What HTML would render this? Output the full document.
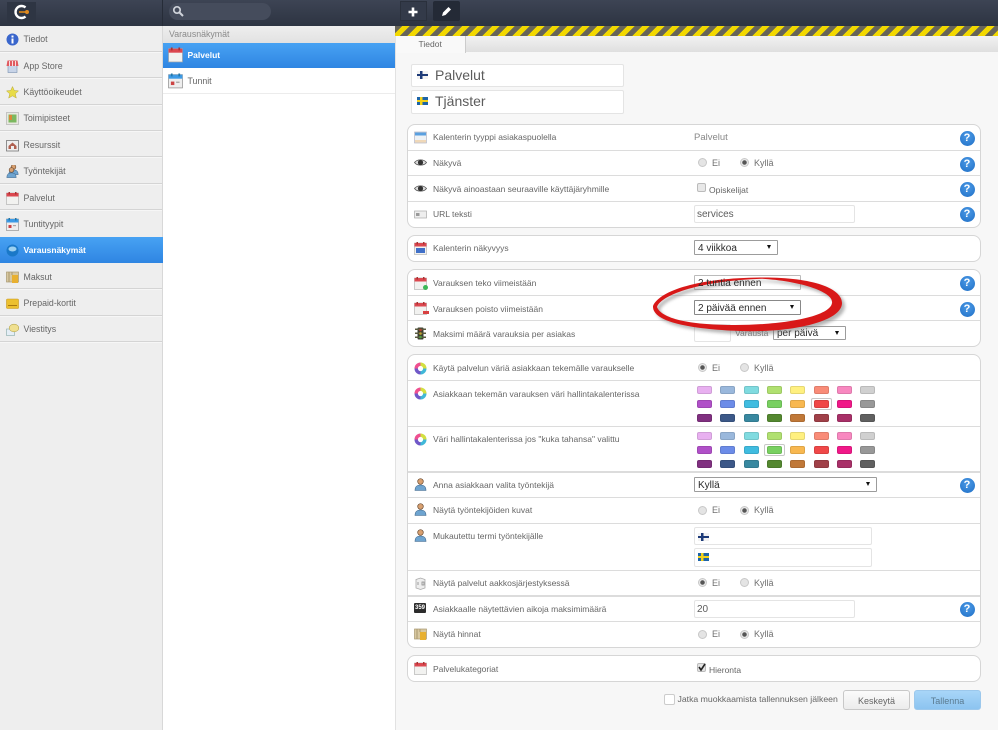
<!DOCTYPE html>
<html lang="fi"><head><meta charset="utf-8"><title>Varausnäkymät</title>
<style>
*{box-sizing:border-box}
html,body{margin:0;padding:0}
body{position:relative;width:998px;height:730px;overflow:hidden;background:#f7f7f7;font-family:"Liberation Sans",Arial,sans-serif;color:#555}
div,span,svg{position:absolute}
.top{left:0;top:0;width:998px;height:26px;background:linear-gradient(#3d4454,#2d3442)}
.side{left:0;top:26px;width:163px;height:704px;background:#eee;border-right:1px solid #d8d8d8}
.sep{left:0;width:162px;height:2px;background:linear-gradient(#d4d4d4 50%,#f6f6f6 50%)}
.s{left:23.5px;font-size:8.8px;line-height:12px;color:#666;white-space:nowrap}
.act{background:linear-gradient(#47a2f3,#2f85e2)}
.list{left:163px;top:26px;width:232px;height:704px;background:#fff}
.main{left:395px;top:36px;width:603px;height:694px;background:#f7f7f7;border-left:1px solid #e2e2e2}
.panel{left:407px;width:574px;background:#fff;border:1px solid #d6d6d6;border-radius:8px}
.hr{left:408px;width:572px;height:1px;background:#dcdcdc}
.l{left:433px;font-size:8.5px;line-height:12px;color:#666;white-space:nowrap}
.v{font-size:9px;line-height:12px;color:#707070;white-space:nowrap}
.inp{background:#fff;border:1px solid #e4e4e4;border-radius:2px}
.intx{font-size:10px;line-height:12px;color:#5c5c5c;white-space:nowrap}
.sel{background:#fff;border:1px solid #9c9c9c;border-radius:1px;font-size:10px;line-height:15px;color:#2a2a2a;padding-left:3px;white-space:nowrap}
.sel:after{content:"";position:absolute;right:6px;top:4px;border-left:2px solid transparent;border-right:2px solid transparent;border-top:4px solid #111}
.q{width:15px;height:15px;left:959.5px;border-radius:50%;background:radial-gradient(circle at 50% 35%,#4c9ae6,#1f6fc6);color:#fff;font-size:11px;font-weight:bold;line-height:15px;text-align:center}
.r{width:9px;height:9px;border-radius:50%;background:#e4e4e4;border:1px solid #c8c8c8}
.r.on{background:radial-gradient(circle,#555 0 2px,#e8e8e8 2.5px)}
.c{width:15px;height:8px;border-radius:2px;border:1px solid rgba(0,0,0,.1)}
.sw{width:21px;height:12px;border:1px solid #c8c8c8;border-radius:2px;background:#fff}
.fi{width:11px;height:8px;background:linear-gradient(#1d3a78,#1d3a78) 3px 0/2.5px 8px no-repeat,linear-gradient(#1d3a78,#1d3a78) 0 3px/11px 2px no-repeat,#f2f2f2}
.se{width:11px;height:8px;background:linear-gradient(#f2d21a,#f2d21a) 3px 0/2.5px 8px no-repeat,linear-gradient(#f2d21a,#f2d21a) 0 3px/11px 2px no-repeat,#1c64a8}
.ic{width:13px;height:13px}
.btn{height:20px;top:690px;border-radius:3px;font-size:9px;line-height:20px;text-align:center}
</style></head><body>

<svg width="0" height="0" style="left:0;top:0">
<defs>
<symbol id="cal" viewBox="0 0 13 13"><rect x=".5" y="1" width="12" height="11.5" fill="#f2f2f0" stroke="#aaa" stroke-width=".6"/><rect x=".5" y="1" width="12" height="3.5" fill="#dc4850"/><rect x="2.5" y="0" width="1.5" height="2.5" fill="#a33"/><rect x="9" y="0" width="1.5" height="2.5" fill="#a33"/></symbol>
<symbol id="calb" viewBox="0 0 13 13"><rect x=".5" y="1" width="12" height="11.5" fill="#eee" stroke="#888" stroke-width=".6"/><rect x=".5" y="1" width="12" height="3.5" fill="#3d9be6"/><rect x="2.5" y="0" width="1.5" height="2.5" fill="#27a"/><rect x="9" y="0" width="1.5" height="2.5" fill="#27a"/><rect x="2.5" y="7" width="3" height="3" fill="#c44"/><rect x="7" y="7" width="3" height="1.2" fill="#aaa"/></symbol>
<symbol id="eye" viewBox="0 0 13 13"><path d="M.5 6.500C3 3 10 3 12.500 6.500 10 10 3 10 .5 6.500Z" fill="#ddd" stroke="#555" stroke-width=".8"/><circle cx="6.500" cy="6.500" r="2.600" fill="#333"/></symbol>
<symbol id="wheel" viewBox="0 0 13 13"><circle cx="6.500" cy="6.500" r="6" fill="#ddd"/><path d="M6.500 .5A6 6 0 0 1 12.500 6.500L6.500 6.500Z" fill="#d4e040"/><path d="M12.500 6.500A6 6 0 0 1 6.500 12.500L6.500 6.500Z" fill="#40b8d8"/><path d="M6.500 12.500A6 6 0 0 1 .5 6.500L6.500 6.500Z" fill="#7058c8"/><path d="M.5 6.500A6 6 0 0 1 6.500 .5L6.500 6.500Z" fill="#f05090"/><circle cx="6.500" cy="6.500" r="2.600" fill="#fff"/></symbol>
<symbol id="user" viewBox="0 0 13 13"><circle cx="6.500" cy="3.500" r="2.800" fill="#d8a070" stroke="#6a4a30" stroke-width=".7"/><path d="M1 12.500C1 8 3.500 7 6.500 7S12 8 12 12.500Z" fill="#6ea4d0" stroke="#44688a" stroke-width=".6"/></symbol>
<symbol id="money" viewBox="0 0 13 13"><rect x=".5" y="1" width="12" height="10" fill="#d8c8a0" stroke="#a89870" stroke-width=".7"/><rect x="6" y="4" width="6" height="8" fill="#e8b030"/><path d="M3 1v10M6 1v3" stroke="#a89870"/></symbol>
</defs></svg>

<div class="top"></div>
<div style="left:7px;top:2px;width:29px;height:21px;background:#2e3543"></div>
<svg style="left:12px;top:3px" width="18" height="18" viewBox="0 0 18 18"><path d="M13.500 4.500A6 6 0 1 0 13.500 13.500" fill="none" stroke="#fff" stroke-width="2.400"/><path d="M7 9h7" stroke="#c9801e" stroke-width="1.800"/><circle cx="15" cy="9" r="2" fill="#e08a20"/></svg>
<div style="left:169px;top:3px;width:102px;height:17px;border-radius:9px;background:#454c5c"></div>
<svg style="left:172px;top:5px" width="12" height="12" viewBox="0 0 12 12"><circle cx="5" cy="5" r="3.200" fill="none" stroke="#cfd3da" stroke-width="1.700"/><path d="M7.500 7.500L11 11" stroke="#cfd3da" stroke-width="2"/></svg>
<div style="left:162px;top:0;width:1px;height:26px;background:#262c38"></div>
<div style="left:400px;top:1px;width:27px;height:20px;background:#333a49;border:1px solid #2a303c"></div>
<svg style="left:407px;top:6px" width="12" height="12" viewBox="0 0 12 12"><path d="M6 1.500v9M1.500 6h9" stroke="#fff" stroke-width="2.600"/></svg>
<div style="left:433px;top:1px;width:27px;height:20px;background:#242a36;border-radius:2px"></div>
<svg style="left:440px;top:5px" width="13" height="13" viewBox="0 0 13 13"><path d="M2 11l1-3.500 5.500-5.500 2.500 2.500L5.500 10Z" fill="#fff"/></svg>

<div class="side"></div>
<div class="sep" style="top:51px"></div><div class="sep" style="top:77px"></div><div class="sep" style="top:104px"></div><div class="sep" style="top:130px"></div><div class="sep" style="top:156px"></div><div class="sep" style="top:183px"></div><div class="sep" style="top:209px"></div><div class="sep" style="top:288px"></div><div class="sep" style="top:315px"></div><div class="sep" style="top:341px"></div>
<div class="act" style="left:0;top:237px;width:163px;height:26px"></div>

<svg class="ic" style="left:6px;top:33px" viewBox="0 0 13 13"><circle cx="6.500" cy="6.500" r="6" fill="#3a66cc"/><rect x="5.500" y="5.500" width="2" height="5" fill="#fff"/><rect x="5.500" y="2.500" width="2" height="2" fill="#fff"/></svg>
<div class="s" style="top:33px">Tiedot</div>
<svg class="ic" style="left:6px;top:60px" viewBox="0 0 13 13"><rect x="2" y="5" width="9" height="7.500" fill="#c8d4e8" stroke="#7890b0" stroke-width=".6"/><path d="M1.500 .5h10l1 5.500H.5Z" fill="#e05a60"/><path d="M3.500 1v5M6.500 1v5M9.500 1v5" stroke="#fff" stroke-width=".8"/></svg>
<div class="s" style="top:60px">App Store</div>
<svg class="ic" style="left:6px;top:86px" viewBox="0 0 13 13"><path d="M6.500 .5l1.800 4 4.200.4-3.200 2.900 1 4.300-3.800-2.300-3.800 2.300 1-4.300L.5 4.900l4.200-.4Z" fill="#e8dc48" stroke="#b8a838" stroke-width=".5"/></svg>
<div class="s" style="top:86px">Käyttöoikeudet</div>
<svg class="ic" style="left:6px;top:112px" viewBox="0 0 13 13"><rect x=".5" y=".5" width="12" height="12" fill="#e8e8e0" stroke="#aaa" stroke-width=".6"/><rect x="2.500" y="2.500" width="8" height="8" fill="#7cb860"/><rect x="3" y="3" width="3" height="5" fill="#d88838"/></svg>
<div class="s" style="top:112px">Toimipisteet</div>
<svg class="ic" style="left:6px;top:139px" viewBox="0 0 13 13"><rect x=".5" y="1.500" width="12" height="10.500" fill="#eee" stroke="#777" stroke-width=".8"/><path d="M2.500 7L6.500 3.500l4 3.500v3h-8Z" fill="#b06050"/><rect x="5" y="7" width="3" height="3" fill="#eee"/></svg>
<div class="s" style="top:139px">Resurssit</div>
<svg class="ic" style="left:6px;top:165px" viewBox="0 0 13 13"><use href="#user" x="2" y="-1" width="11" height="11"/><use href="#user" x="0" y="2" width="11" height="11"/></svg>
<div class="s" style="top:165px">Työntekijät</div>
<svg class="ic" style="left:6px;top:192px"><use href="#cal"/></svg>
<div class="s" style="top:192px">Palvelut</div>
<svg class="ic" style="left:6px;top:218px"><use href="#calb"/></svg>
<div class="s" style="top:218px">Tuntityypit</div>
<svg class="ic" style="left:6px;top:244px" viewBox="0 0 13 13"><circle cx="6.500" cy="6.500" r="6" fill="#1a78c8"/><ellipse cx="6.500" cy="5" rx="4" ry="2.500" fill="#9cd0f0"/></svg>
<div class="s" style="top:244px;color:#fff;font-weight:bold;font-size:8.500px">Varausnäkymät</div>
<svg class="ic" style="left:6px;top:271px"><use href="#money"/></svg>
<div class="s" style="top:271px">Maksut</div>
<svg class="ic" style="left:6px;top:297px" viewBox="0 0 13 13"><rect x=".5" y="2" width="12" height="9.500" rx="1" fill="#ecc030" stroke="#c89820" stroke-width=".6"/><rect x="2" y="8" width="9" height="1" fill="#a87810"/></svg>
<div class="s" style="top:297px">Prepaid-kortit</div>
<svg class="ic" style="left:6px;top:323px" viewBox="0 0 13 13"><rect x=".5" y="6" width="8" height="6.500" fill="#e4eef6" stroke="#8aa" stroke-width=".6"/><ellipse cx="8" cy="5" rx="4.800" ry="3.800" fill="#f0e090" stroke="#b8a850" stroke-width=".6"/></svg>
<div class="s" style="top:323px">Viestitys</div>

<div class="list"></div>
<div style="left:163px;top:26px;width:232px;height:17px;background:linear-gradient(#eee,#e2e2e2)"></div>
<div class="s" style="left:169px;top:28px;color:#8a8a8a">Varausnäkymät</div>
<div class="act" style="left:163px;top:43px;width:232px;height:25px"></div>
<svg style="left:168px;top:47px" width="15" height="16"><use href="#cal" width="15" height="16"/></svg>
<div class="s" style="left:187.500px;top:49px;color:#fff;font-weight:bold;font-size:8.500px">Palvelut</div>
<svg style="left:168px;top:73px" width="15" height="16"><use href="#calb" width="15" height="16"/></svg>
<div class="s" style="left:187.500px;top:75px">Tunnit</div>
<div style="left:163px;top:93px;width:232px;height:1px;background:#ececec"></div>

<div class="main"></div>
<div style="left:395px;top:26px;width:603px;height:10px;background:repeating-linear-gradient(135deg,#66645a 0 5.300px,#f2d800 5.300px 10.600px)"></div>
<div style="left:396px;top:36px;width:602px;height:16px;background:linear-gradient(#f2f2f2,#dfdfdf)"></div>
<div style="left:396px;top:36px;width:70px;height:17px;background:#f9f9f9;border-right:1px solid #ccc"></div>
<div style="left:418.500px;top:38px;font-size:8.500px;line-height:12px;color:#666">Tiedot</div>

<div class="inp" style="left:411px;top:64px;width:213px;height:23px"></div>
<div class="fi" style="left:417px;top:71px"></div>
<div style="left:435px;top:67px;font-size:14px;line-height:16px;color:#5c5c5c">Palvelut</div>
<div class="inp" style="left:411px;top:90px;width:213px;height:24px"></div>
<div class="se" style="left:417px;top:97px"></div>
<div style="left:435px;top:93px;font-size:14px;line-height:16px;color:#5c5c5c">Tjänster</div>

<!-- panels -->
<div class="panel" style="top:124px;height:104px"></div>
<div class="hr" style="top:150px"></div><div class="hr" style="top:175px"></div><div class="hr" style="top:201px"></div>
<div class="panel" style="top:235px;height:27px"></div>
<div class="panel" style="top:269px;height:78px"></div>
<div class="hr" style="top:295px"></div><div class="hr" style="top:320px"></div>
<div class="panel" style="top:354px;height:294px"></div>
<div class="hr" style="top:380px"></div><div class="hr" style="top:426px"></div><div class="hr" style="top:471px;height:2px"></div><div class="hr" style="top:497px"></div><div class="hr" style="top:523px"></div><div class="hr" style="top:570px"></div><div class="hr" style="top:595px;height:2px"></div><div class="hr" style="top:621px"></div>
<div class="panel" style="top:655px;height:27px"></div>

<!-- row 1 -->
<svg class="ic" style="left:414px;top:131px" viewBox="0 0 13 13"><rect x=".5" y="1" width="12" height="11" fill="#eef2f6" stroke="#aab" stroke-width=".6"/><rect x="1" y="1.500" width="11" height="3" fill="#5aa0e0"/><rect x="1" y="9" width="11" height="2.500" fill="#f0d8b8"/></svg>
<div class="l" style="top:131px">Kalenterin tyyppi asiakaspuolella</div>
<div class="v" style="left:694px;top:132px;color:#888;font-size:9.500px">Palvelut</div>
<div class="q" style="top:131px">?</div>

<svg class="ic" style="left:414px;top:156px"><use href="#eye"/></svg>
<div class="l" style="top:157px">Näkyvä</div>
<div class="r" style="left:698px;top:158px"></div><div class="v" style="left:712px;top:157px">Ei</div>
<div class="r on" style="left:740px;top:158px"></div><div class="v" style="left:754px;top:157px">Kyllä</div>
<div class="q" style="top:156.500px">?</div>

<svg class="ic" style="left:414px;top:182px"><use href="#eye"/></svg>
<div class="l" style="top:183px">Näkyvä ainoastaan seuraaville käyttäjäryhmille</div>
<div style="left:697px;top:183px;width:9px;height:9px;background:#e8e8e8;border:1px solid #bbb;border-radius:2px"></div>
<div class="l" style="left:709px;top:184px">Opiskelijat</div>
<div class="q" style="top:182px">?</div>

<svg class="ic" style="left:414px;top:208px" viewBox="0 0 13 13"><rect x=".5" y="3" width="12" height="7" fill="#eee" stroke="#aaa" stroke-width=".7"/><rect x="2" y="5" width="3.500" height="3" fill="#999"/></svg>
<div class="l" style="top:208px">URL teksti</div>
<div class="inp" style="left:694px;top:205px;width:161px;height:18px"></div>
<div class="intx" style="left:697px;top:208.500px">services</div>
<div class="q" style="top:207px">?</div>

<!-- row 2 -->
<svg class="ic" style="left:414px;top:242px"><use href="#cal"/></svg>
<div style="left:416px;top:248px;width:9px;height:5px;background:#4070c8"></div>
<div class="l" style="top:242px">Kalenterin näkyvyys</div>
<div class="sel" style="left:694px;top:240px;width:84px;height:15px">4 viikkoa</div>

<!-- row 3 -->
<div style="left:694px;top:275px;width:107px;height:15px;background:#fff;border:1px solid #bbb;border-radius:1px"></div>
<div class="sel" style="left:694px;top:300px;width:107px;height:15px;border-color:#888">2 päivää ennen</div>
<div class="inp" style="left:694px;top:324px;width:37px;height:18px"></div>
<div class="l" style="left:735px;top:327px;color:#777">Varausta</div>
<div class="sel" style="left:773px;top:326px;width:73px;height:14px;line-height:13px">per päivä</div>

<svg class="ic" style="left:414px;top:277px"><use href="#cal"/></svg><div style="left:423px;top:285px;width:5px;height:5px;border-radius:50%;background:#3cb858"></div>
<div class="l" style="top:277px">Varauksen teko viimeistään</div>
<div class="q" style="top:276px">?</div>
<svg class="ic" style="left:414px;top:302px"><use href="#cal"/></svg><div style="left:423px;top:311px;width:6px;height:3px;background:#d84040"></div>
<div class="l" style="top:303px">Varauksen poisto viimeistään</div>
<div class="q" style="top:301.500px">?</div>
<svg class="ic" style="left:414px;top:327px" viewBox="0 0 13 13"><rect x="3.500" y=".5" width="6" height="12" rx="1" fill="#3c4030"/><rect x="1" y="1.500" width="11" height="1.500" fill="#5a5a40"/><rect x="1" y="5.500" width="11" height="1.500" fill="#5a5a40"/><rect x="1" y="9.500" width="11" height="1.500" fill="#5a5a40"/><circle cx="6.500" cy="3" r="1.300" fill="#b04030"/><circle cx="6.500" cy="6.500" r="1.300" fill="#c0a030"/><circle cx="6.500" cy="10" r="1.300" fill="#50a040"/></svg>
<div class="l" style="top:327.500px">Maksimi määrä varauksia per asiakas</div>

<!-- ellipse -->
<svg style="left:640px;top:265px;overflow:visible" width="220" height="80" viewBox="640 265 220 80">
<path fill="#777" opacity=".55" transform="translate(3 3)" fill-rule="evenodd" d="M653 306C660 290 700 278 760 277.500C812 277 842 288 842 303C842 322 790 333 740 331C690 329 652 322 653 306ZM657 307C662 294 702 281 762 278.800C800 281 834 292 832 303C830 317 782 325 735 325C695 325 662 320 657 307Z" style="filter:blur(1.500px)"/>
<path fill="#d81818" fill-rule="evenodd" d="M653 306C660 290 700 278 760 277.500C812 277 842 288 842 303C842 322 790 333 740 331C690 329 652 322 653 306ZM657 307C662 294 702 281 762 278.800C800 281 834 292 832 303C830 317 782 325 735 325C695 325 662 320 657 307Z"/>
</svg>
<div style="left:698px;top:276px;font-size:10px;line-height:15px;color:#2a2a2a;white-space:nowrap">2 tuntia ennen</div>

<!-- row 4 -->
<svg class="ic" style="left:414px;top:362px"><use href="#wheel"/></svg>
<div class="l" style="top:362px">Käytä palvelun väriä asiakkaan tekemälle varaukselle</div>
<div class="r on" style="left:698px;top:363px"></div><div class="v" style="left:712px;top:362px">Ei</div>
<div class="r" style="left:740px;top:363px"></div><div class="v" style="left:754px;top:362px">Kyllä</div>

<svg class="ic" style="left:414px;top:387px"><use href="#wheel"/></svg>
<div class="l" style="top:388px">Asiakkaan tekemän varauksen väri hallintakalenterissa</div>
<svg class="ic" style="left:414px;top:433px"><use href="#wheel"/></svg>
<div class="l" style="top:433px">Väri hallintakalenterissa jos "kuka tahansa" valittu</div>

<div class="sw" style="left:811px;top:398px"></div>
<div class="sw" style="left:764px;top:444px"></div>

<div class="c" style="left:697px;top:386px;background:#e8b0f0"></div><div class="c" style="left:720px;top:386px;background:#9ab8dc"></div><div class="c" style="left:744px;top:386px;background:#80dbe0"></div><div class="c" style="left:767px;top:386px;background:#b0e070"></div><div class="c" style="left:790px;top:386px;background:#fff080"></div><div class="c" style="left:814px;top:386px;background:#f98c78"></div><div class="c" style="left:837px;top:386px;background:#f888c0"></div><div class="c" style="left:860px;top:386px;background:#d0d0d0"></div>
<div class="c" style="left:697px;top:400px;background:#b050c8"></div><div class="c" style="left:720px;top:400px;background:#6c8ce8"></div><div class="c" style="left:744px;top:400px;background:#40bce0"></div><div class="c" style="left:767px;top:400px;background:#78d060"></div><div class="c" style="left:790px;top:400px;background:#f8b850"></div><div class="c" style="left:814px;top:400px;background:#f04848"></div><div class="c" style="left:837px;top:400px;background:#f01888"></div><div class="c" style="left:860px;top:400px;background:#989898"></div>
<div class="c" style="left:697px;top:414px;background:#803080"></div><div class="c" style="left:720px;top:414px;background:#3c5888"></div><div class="c" style="left:744px;top:414px;background:#3888a0"></div><div class="c" style="left:767px;top:414px;background:#548830"></div><div class="c" style="left:790px;top:414px;background:#c07838"></div><div class="c" style="left:814px;top:414px;background:#a04048"></div><div class="c" style="left:837px;top:414px;background:#a83068"></div><div class="c" style="left:860px;top:414px;background:#606060"></div>

<div class="c" style="left:697px;top:432px;background:#e8b0f0"></div><div class="c" style="left:720px;top:432px;background:#9ab8dc"></div><div class="c" style="left:744px;top:432px;background:#80dbe0"></div><div class="c" style="left:767px;top:432px;background:#b0e070"></div><div class="c" style="left:790px;top:432px;background:#fff080"></div><div class="c" style="left:814px;top:432px;background:#f98c78"></div><div class="c" style="left:837px;top:432px;background:#f888c0"></div><div class="c" style="left:860px;top:432px;background:#d0d0d0"></div>
<div class="c" style="left:697px;top:446px;background:#b050c8"></div><div class="c" style="left:720px;top:446px;background:#6c8ce8"></div><div class="c" style="left:744px;top:446px;background:#40bce0"></div><div class="c" style="left:767px;top:446px;background:#78d060"></div><div class="c" style="left:790px;top:446px;background:#f8b850"></div><div class="c" style="left:814px;top:446px;background:#f04848"></div><div class="c" style="left:837px;top:446px;background:#f01888"></div><div class="c" style="left:860px;top:446px;background:#989898"></div>
<div class="c" style="left:697px;top:460px;background:#803080"></div><div class="c" style="left:720px;top:460px;background:#3c5888"></div><div class="c" style="left:744px;top:460px;background:#3888a0"></div><div class="c" style="left:767px;top:460px;background:#548830"></div><div class="c" style="left:790px;top:460px;background:#c07838"></div><div class="c" style="left:814px;top:460px;background:#a04048"></div><div class="c" style="left:837px;top:460px;background:#a83068"></div><div class="c" style="left:860px;top:460px;background:#606060"></div>

<svg class="ic" style="left:414px;top:478px"><use href="#user"/></svg>
<div class="l" style="top:478.500px">Anna asiakkaan valita työntekijä</div>
<div class="sel" style="left:694px;top:477px;width:183px;height:15px">Kyllä</div>
<div class="q" style="top:477.500px">?</div>

<svg class="ic" style="left:414px;top:503px"><use href="#user"/></svg>
<div class="l" style="top:504px">Näytä työntekijöiden kuvat</div>
<div class="r" style="left:698px;top:506px"></div><div class="v" style="left:712px;top:504px">Ei</div>
<div class="r on" style="left:740px;top:506px"></div><div class="v" style="left:754px;top:504px">Kyllä</div>

<svg class="ic" style="left:414px;top:529px"><use href="#user"/></svg>
<div class="l" style="top:530px">Mukautettu termi työntekijälle</div>
<div class="inp" style="left:694px;top:527px;width:178px;height:18px"></div><div class="fi" style="left:698px;top:533px"></div>
<div class="inp" style="left:694px;top:548px;width:178px;height:19px"></div><div class="se" style="left:698px;top:553px"></div>

<svg class="ic" style="left:414px;top:577px" viewBox="0 0 13 13"><path d="M2 2.500L6.500 1 11 2.500V11L6.500 12.500 2 11Z" fill="#eee" stroke="#aaa" stroke-width=".8"/><path d="M4 5v3M8 5h2v3H8Z" stroke="#888" stroke-width=".8" fill="none"/></svg>
<div class="l" style="top:577px">Näytä palvelut aakkosjärjestyksessä</div>
<div class="r on" style="left:698px;top:578px"></div><div class="v" style="left:712px;top:577px">Ei</div>
<div class="r" style="left:740px;top:578px"></div><div class="v" style="left:754px;top:577px">Kyllä</div>

<div style="left:414px;top:603px;width:12px;height:10px;background:#2c2c2c;border-radius:1px;color:#fff;font-size:6px;line-height:10px;text-align:center;font-weight:bold">359</div>
<div class="l" style="top:603px">Asiakkaalle näytettävien aikoja maksimimäärä</div>
<div class="inp" style="left:694px;top:600px;width:161px;height:18px"></div>
<div class="intx" style="left:697px;top:603.500px">20</div>
<div class="q" style="top:601.500px">?</div>

<svg class="ic" style="left:414px;top:628px"><use href="#money"/></svg>
<div class="l" style="top:628px">Näytä hinnat</div>
<div class="r" style="left:698px;top:630px"></div><div class="v" style="left:712px;top:628px">Ei</div>
<div class="r on" style="left:740px;top:630px"></div><div class="v" style="left:754px;top:628px">Kyllä</div>

<svg class="ic" style="left:414px;top:662px"><use href="#cal"/></svg>
<div class="l" style="top:663px">Palvelukategoriat</div>
<div style="left:697px;top:663px;width:9px;height:9px;background:#e4e4e4;border:1px solid #bbb;border-radius:2px"></div>
<svg style="left:697px;top:662px" width="10" height="10" viewBox="0 0 10 10"><path d="M2 5l2 3 4-6" fill="none" stroke="#222" stroke-width="1.600"/></svg>
<div class="l" style="left:709px;top:664px">Hieronta</div>

<div style="left:664px;top:694px;width:11px;height:11px;background:#fff;border:1px solid #ccc;border-radius:2px"></div>
<div class="l" style="left:677.500px;top:693px;font-size:8.700px">Jatka muokkaamista tallennuksen jälkeen</div>
<div class="btn" style="left:843px;width:67px;background:linear-gradient(#fbfbfb,#ececec);border:1px solid #c8c8c8;color:#666">Keskeytä</div>
<div class="btn" style="left:914px;width:67px;background:linear-gradient(#a8d6f8,#8cc4f0);border:1px solid #9cc8ec;color:#5a7a90">Tallenna</div>
</body></html>
